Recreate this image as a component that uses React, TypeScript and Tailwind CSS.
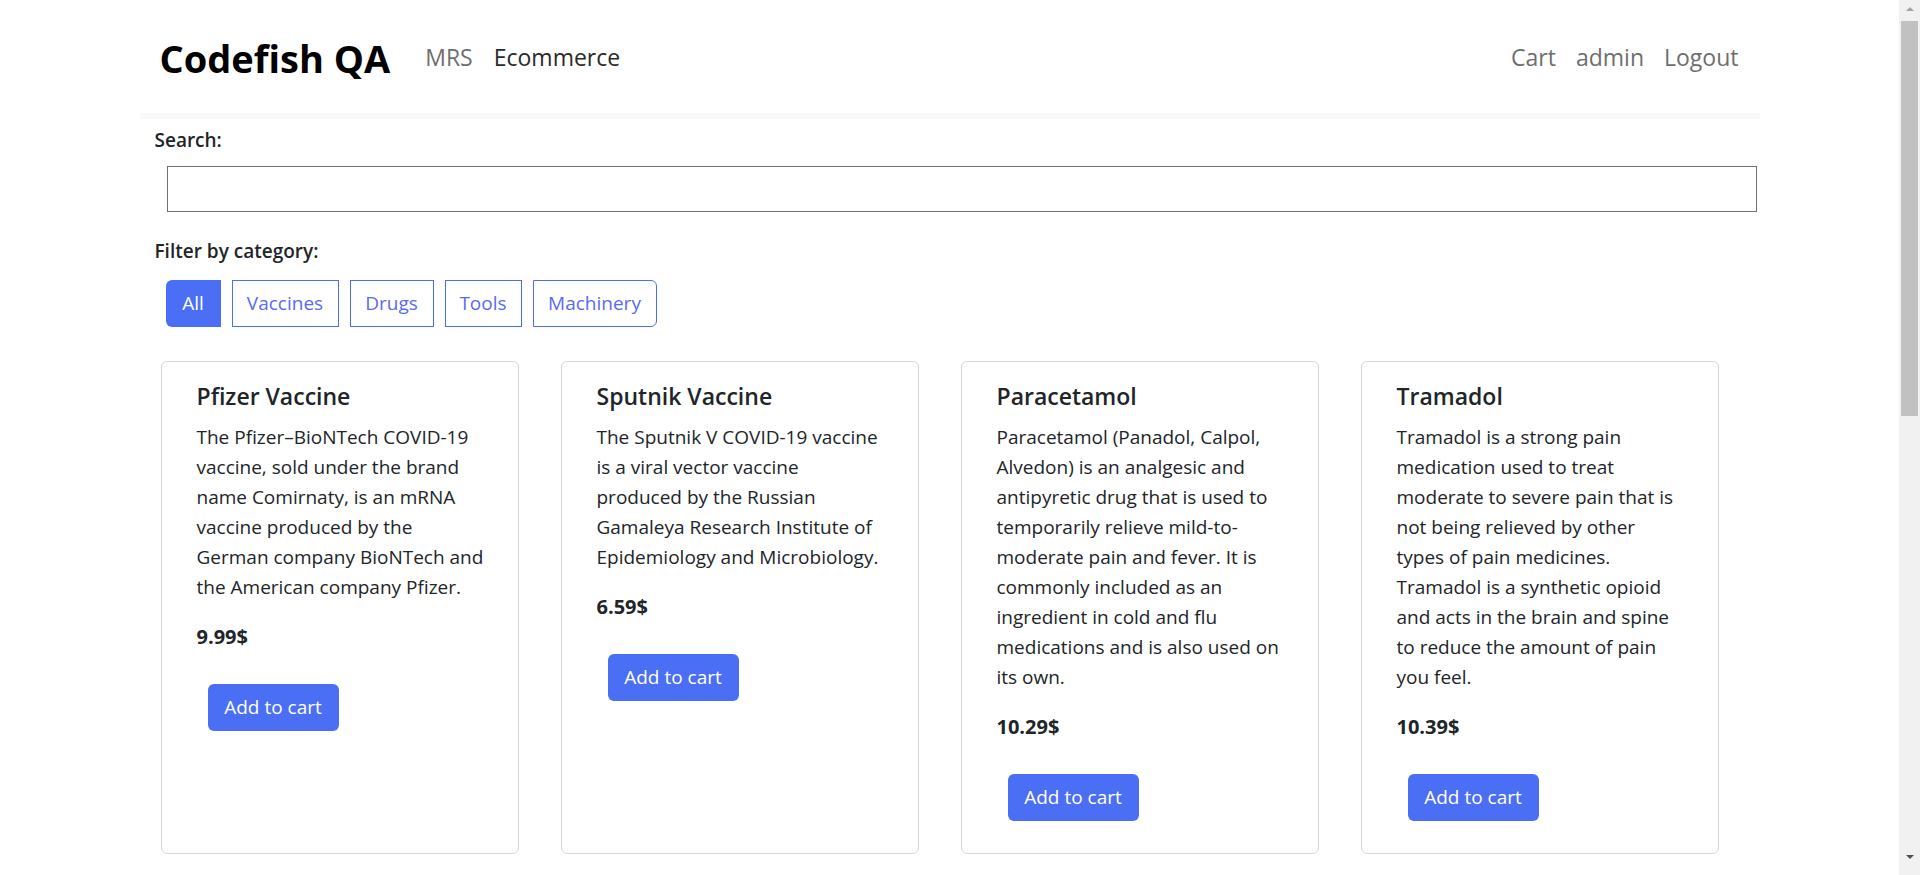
import React from "react";

type Product = { title: string; lines: string[]; price: string };

const products: Product[] = [
  {
    title: "Pfizer Vaccine",
    lines: [
      "The Pfizer–BioNTech COVID-19",
      "vaccine, sold under the brand",
      "name Comirnaty, is an mRNA",
      "vaccine produced by the",
      "German company BioNTech and",
      "the American company Pfizer.",
    ],
    price: "9.99$",
  },
  {
    title: "Sputnik Vaccine",
    lines: [
      "The Sputnik V COVID-19 vaccine",
      "is a viral vector vaccine",
      "produced by the Russian",
      "Gamaleya Research Institute of",
      "Epidemiology and Microbiology.",
    ],
    price: "6.59$",
  },
  {
    title: "Paracetamol",
    lines: [
      "Paracetamol (Panadol, Calpol,",
      "Alvedon) is an analgesic and",
      "antipyretic drug that is used to",
      "temporarily relieve mild-to-",
      "moderate pain and fever. It is",
      "commonly included as an",
      "ingredient in cold and flu",
      "medications and is also used on",
      "its own.",
    ],
    price: "10.29$",
  },
  {
    title: "Tramadol",
    lines: [
      "Tramadol is a strong pain",
      "medication used to treat",
      "moderate to severe pain that is",
      "not being relieved by other",
      "types of pain medicines.",
      "Tramadol is a synthetic opioid",
      "and acts in the brain and spine",
      "to reduce the amount of pain",
      "you feel.",
    ],
    price: "10.39$",
  },
];

function Card({ p }: { p: Product }) {
  return (
    <div className="flex h-[493px] w-[358px] shrink-0 flex-col rounded-[6px] border border-[#d6d6d6] pb-[32px] pl-[35px] pr-[16px] pt-[20px]">
      <h5 className="text-[23px] font-semibold leading-[29px] text-[#212529]">{p.title}</h5>
      <p className="mt-[11px] text-[19px] leading-[30px] text-[#212529]">
        {p.lines.map((l, i) => (
          <span key={i} className="block whitespace-nowrap">
            {l}
          </span>
        ))}
      </p>
      <p className="mt-[20px] text-[20px] font-bold leading-[30px] text-[#212529]">{p.price}</p>
      <div className="mt-[32px] pl-[11px]">
        <button className="flex h-[47px] w-[131px] items-center justify-center rounded-[6px] bg-[#4b6ff4] text-[19px] text-white">
          Add to cart
        </button>
      </div>
    </div>
  );
}

export default function App() {
  const filters = [
    { label: "Vaccines", w: "w-[107px]", r: "" },
    { label: "Drugs", w: "w-[84px]", r: "" },
    { label: "Tools", w: "w-[77px]", r: "" },
    { label: "Machinery", w: "w-[124px]", r: "rounded-r-[6px]" },
  ];
  return (
    <div className="flex h-[875px] overflow-hidden bg-white font-['Open_Sans',sans-serif] text-[#212529]">
      <main className="w-[1899px] shrink-0">
        <div className="mx-auto w-[1620px]">
          <header className="flex h-[113px] items-center justify-between pl-[20px] pr-[21px] pt-[2px]">
            <div className="flex items-center">
              <span className="mr-[35px] text-[38px] font-bold leading-none text-black">Codefish QA</span>
              <nav className="flex gap-[21px] text-[23px] leading-none">
                <a className="text-[#6e6e6e]">MRS</a>
                <a className="text-[#2a2a2a]">Ecommerce</a>
              </nav>
            </div>
            <nav className="flex gap-[20px] text-[23px] leading-none text-[#6e6e6e]">
              <a>Cart</a>
              <a>admin</a>
              <a>Logout</a>
            </nav>
          </header>
          <div className="h-[6px] bg-[#f8f9fa]" />

          <label className="mt-[9px] block pl-[15px] text-[19px] font-semibold leading-[24px]">Search:</label>
          <div className="mt-[14px] pl-[27px] pr-[3px]">
            <input className="block h-[46px] w-full border border-[#707070] bg-white outline-none" />
          </div>

          <label className="mt-[27px] block pl-[15px] text-[19px] font-semibold leading-[24px]">
            Filter by category:
          </label>
          <div className="mt-[17px] flex gap-[11px] pl-[26px]">
            <button className="flex h-[47px] w-[55px] items-center justify-center rounded-l-[6px] bg-[#4b6ff4] text-[19px] text-white">
              All
            </button>
            {filters.map((f) => (
              <button
                key={f.label}
                className={`flex h-[47px] items-center justify-center border border-[#4b6ff4] bg-white text-[19px] text-[#5a6af2] ${f.w} ${f.r}`}
              >
                {f.label}
              </button>
            ))}
          </div>

          <div className="mt-[34px] flex gap-[42px] pl-[21px]">
            {products.map((p) => (
              <Card key={p.title} p={p} />
            ))}
          </div>
        </div>
      </main>
      <aside className="flex h-[875px] w-[21px] shrink-0 flex-col bg-[#f1f1f1]">
        <div className="flex h-[17px] items-center justify-center pl-[1px]">
          <div className="h-0 w-0 border-b-[4px] border-l-[4px] border-r-[4px] border-b-[#a3a3a3] border-l-transparent border-r-transparent" />
        </div>
        <div className="mx-[2px] mt-[4px] h-[395px] bg-[#c1c1c1]" />
        <div className="flex-1" />
        <div className="flex h-[26px] items-start justify-center pl-[1px] pt-[6px]">
          <div className="h-0 w-0 border-l-[4px] border-r-[4px] border-t-[4px] border-l-transparent border-r-transparent border-t-[#505050]" />
        </div>
      </aside>
    </div>
  );
}
